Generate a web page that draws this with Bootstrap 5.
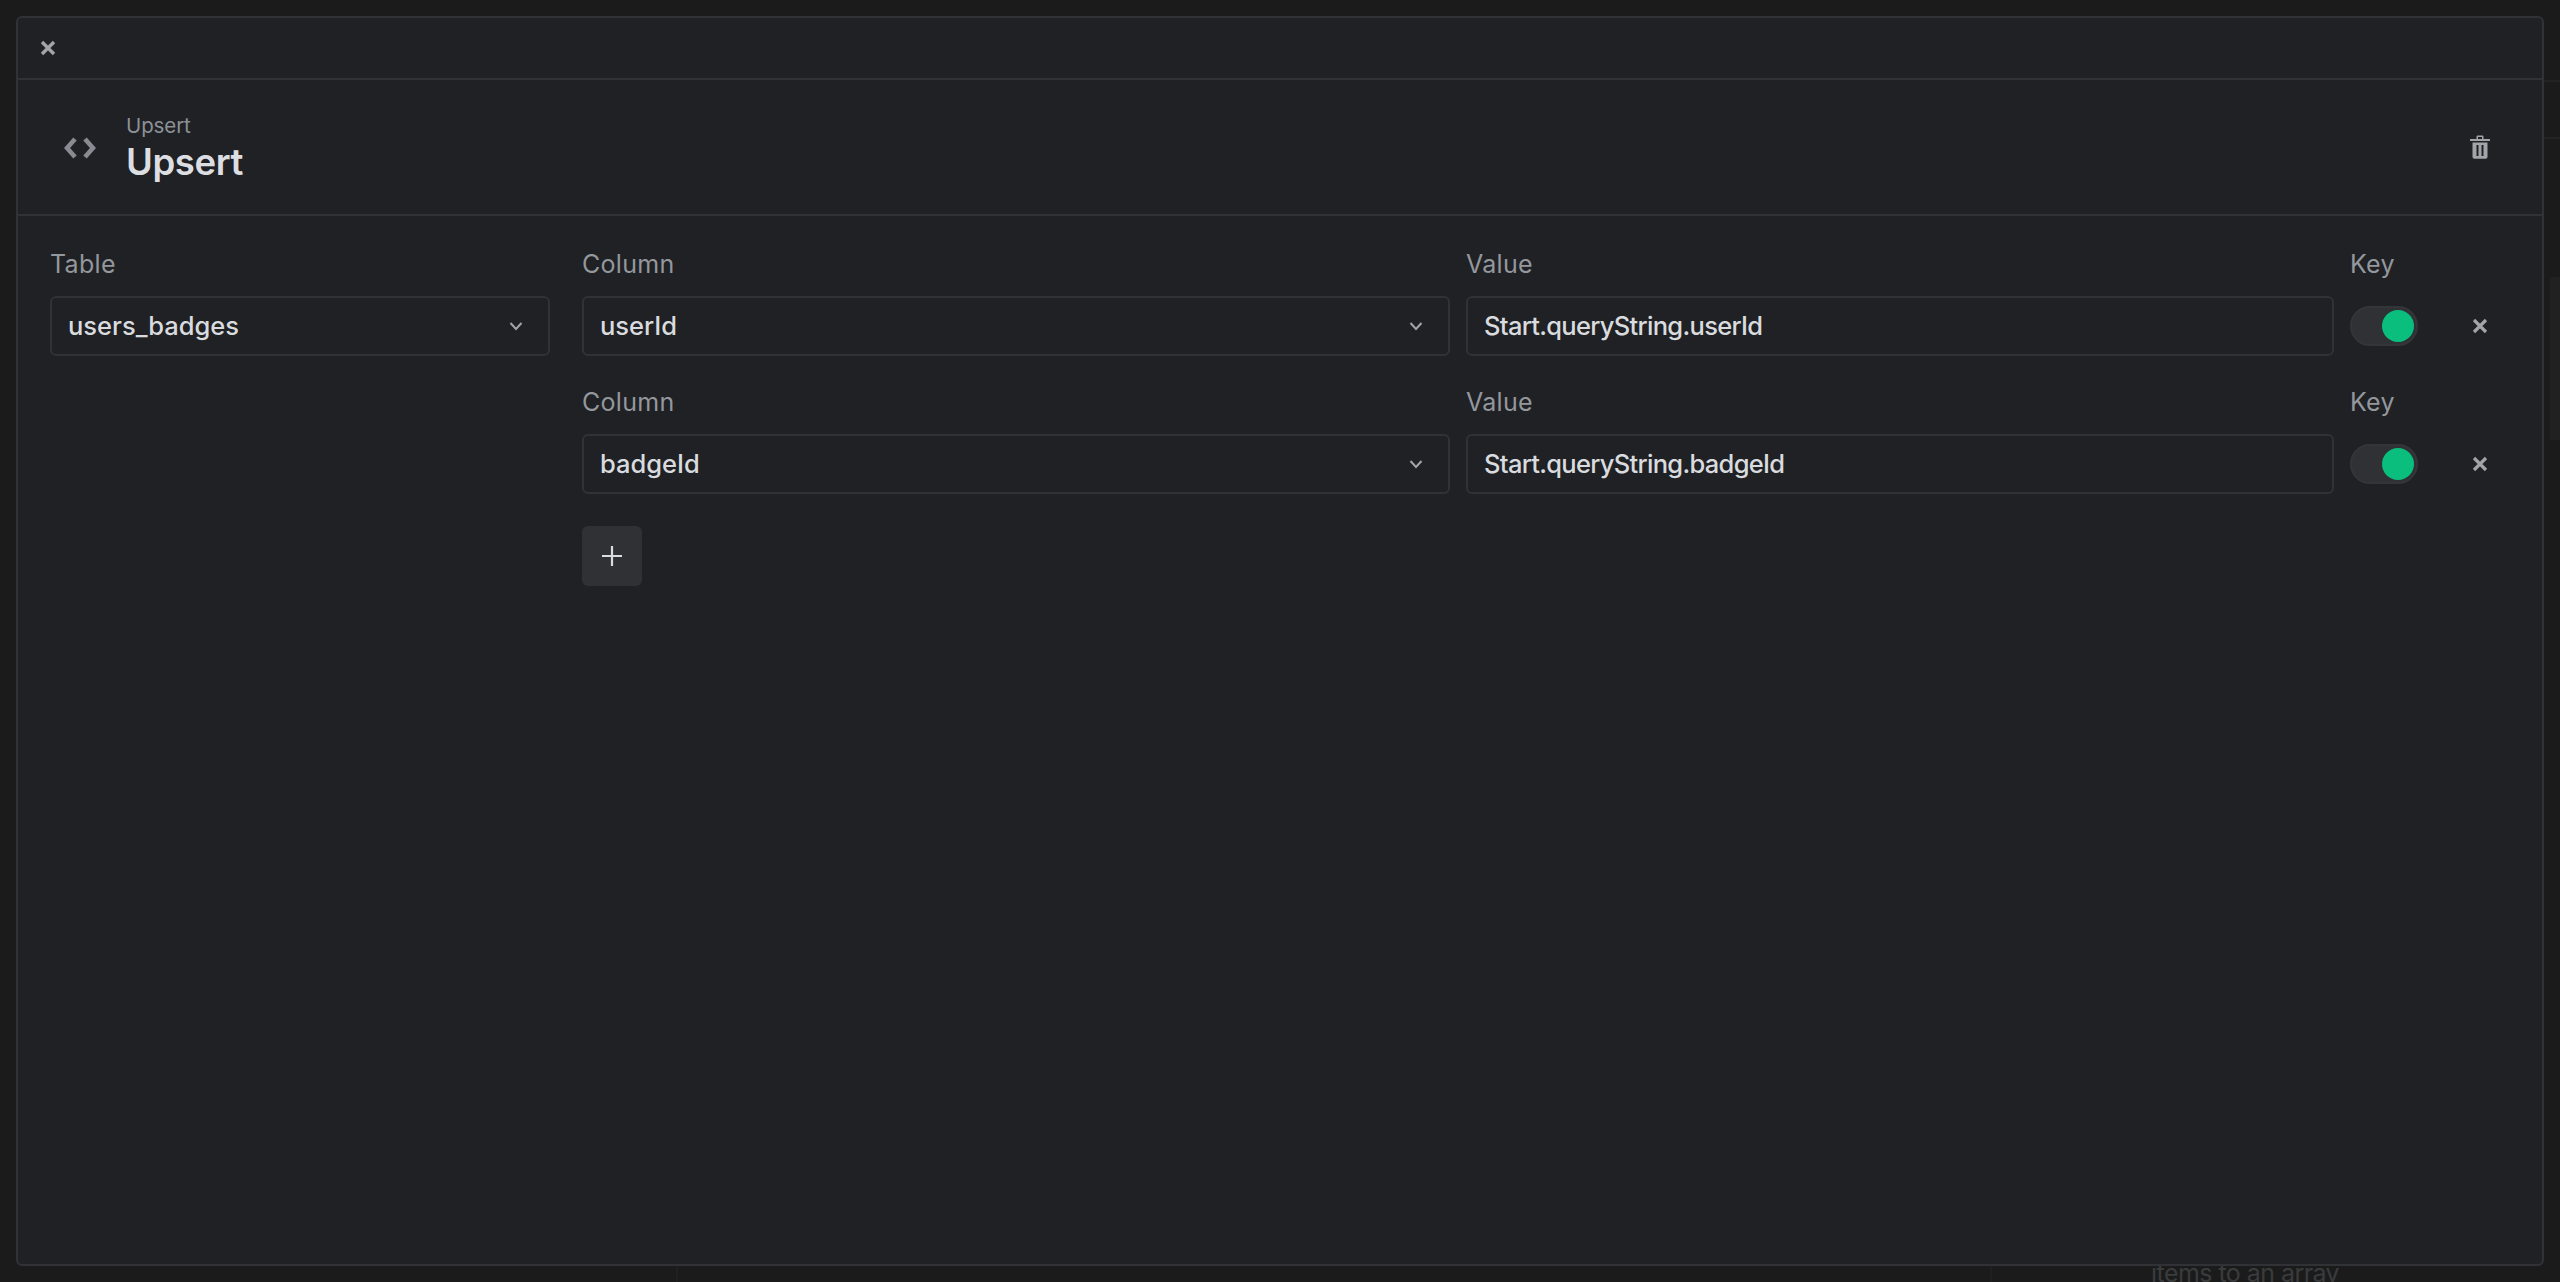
<!DOCTYPE html>
<html lang="en" data-bs-theme="dark">
<head>
<meta charset="utf-8">
<title>Upsert</title>
<link href="https://cdn.jsdelivr.net/npm/bootstrap@5.3.0/dist/css/bootstrap.min.css" rel="stylesheet">
<style>
html,body{height:100%;overflow:hidden}
body{background:#1b1b1b;font-family:Inter,"Noto Sans",sans-serif;color:#d5d7da;position:relative}
.ghost-text{position:absolute;left:2151px;top:1255px;font-size:25px;color:#3a3b3d;line-height:36px;white-space:nowrap;letter-spacing:-.55px}
.ghost-rule{position:absolute}
.ghost-a{left:2550px;top:277px;width:10px;height:163px;background:#212121}
.ghost-b{left:676px;top:1266px;width:1316px;height:16px;border-left:2px solid #202020;border-right:2px solid #202020}
.ghost-c{left:2544px;top:80px;width:16px;height:2px;background:#232323}
.ghost-d{left:2544px;top:137px;width:16px;height:2px;background:#232323}
.sheet{position:absolute;left:16px;top:16px;width:2528px;height:1250px;background:#1f2125;border:2px solid #303236;border-radius:6px;display:flex;flex-direction:column}
.sheet-top{height:62px;border-bottom:2px solid #303236;padding-left:20px}
.icon-btn{background:none;border:0;padding:0;color:#a1a4a9;display:inline-flex;align-items:center;justify-content:center;line-height:0}
.sheet-head{height:136px;border-bottom:2px solid #303236;padding:0 52px 0 46px}
.head-icon{width:32px;color:#888c92;margin-right:30px;position:relative;top:1px}
.head-kicker{font-size:20.5px;line-height:28px;color:#8d9197;letter-spacing:-.1px}
.head-title{font-size:36.5px;line-height:42px;font-weight:600;color:#dcdee1;letter-spacing:-.4px;margin-top:1px}
.sheet-body{padding:32px 32px 0 32px;display:grid;grid-template-columns:500px 1fr;column-gap:32px}
.field-grid{display:grid;grid-template-columns:1fr 1fr 84px 60px;column-gap:16px;row-gap:30px}
.field-label{font-size:25px;line-height:32px;color:#94979c;margin:0 0 16px;display:block;letter-spacing:.3px}
.form-control.tall,.form-select.tall{height:60px;background-color:#1f2125;border:2px solid #303236;border-radius:6px;color:#d9dbde;font-size:25.5px;line-height:36px;padding:10px 16px;font-weight:500;box-shadow:none}
.form-control.tall{letter-spacing:-.7px;padding-top:9px;padding-bottom:11px}
.form-select.tall{background-image:url("data:image/svg+xml,%3csvg xmlns='http://www.w3.org/2000/svg' viewBox='0 0 16 16'%3e%3cpath fill='none' stroke='%23a1a4a9' stroke-width='2' d='M2.5 5l5.5 6 5.5-6'/%3e%3c/svg%3e");background-size:16px 16px;background-position:right 24px center;padding-right:50px;letter-spacing:0}
.form-check.toggle-wrap{margin:0;padding:0;min-height:60px;display:flex;align-items:center}
.form-switch.toggle-wrap .form-check-input:checked{width:68px;height:40px;margin:0;border:2px solid #333539;background-color:#2f3135;background-image:url("data:image/svg+xml,%3csvg xmlns='http://www.w3.org/2000/svg' viewBox='-4 -4 8 8'%3e%3ccircle r='4' fill='%230abf7e'/%3e%3c/svg%3e");background-size:32px 32px;background-position:right 2px center;box-shadow:none}
.remove-cell{height:60px}
.add-btn{width:60px;height:60px;padding:0;background:#2f3135;border:0;border-radius:6px;color:#d9dbde;display:flex;align-items:center;justify-content:center;margin-top:2px}
.remove-spacer{height:48px}
</style>
</head>
<body>
<div class="ghost-rule ghost-a"></div>
<div class="ghost-rule ghost-b"></div>
<div class="ghost-rule ghost-c"></div>
<div class="ghost-rule ghost-d"></div>
<div class="ghost-text">items to an array</div>
<main class="sheet">
  <div class="sheet-top d-flex align-items-center flex-shrink-0">
    <button class="icon-btn" type="button" aria-label="Close">
      <svg width="20" height="20" viewBox="0 0 20 20"><path d="M4 4l12 12M16 4L4 16" stroke="currentColor" stroke-width="3.4" fill="none"/></svg>
    </button>
  </div>
  <header class="sheet-head d-flex align-items-center flex-shrink-0">
    <svg class="head-icon" height="24" viewBox="0 0 32 24" aria-hidden="true"><path d="M11 3L3 12l8 9M21 3l8 9-8 9" stroke="currentColor" stroke-width="4.600" fill="none"/></svg>
    <div class="flex-grow-1">
      <div class="head-kicker">Upsert</div>
      <div class="head-title">Upsert</div>
    </div>
    <button class="icon-btn" type="button" aria-label="Delete">
      <svg width="20" height="24" viewBox="0 0 20 24"><path d="M0 4h20v2H0zM6.500 4V1.700Q6.500.6 7.700.6h4.600q1.200 0 1.200 1.100V4H12V2.100H8V4z" fill="currentColor"/><path fill-rule="evenodd" d="M2.500 7.500h15V22q0 1.800-1.800 1.800H4.300Q2.500 23.800 2.500 22zM6.500 10v11h2V10zM11.500 10v11h2V10z" fill="currentColor"/></svg>
    </button>
  </header>
  <section class="sheet-body">
    <div>
      <label class="field-label" for="tbl">Table</label>
      <select id="tbl" class="form-select tall"><option>users_badges</option></select>
    </div>
    <div>
      <div class="field-grid">
        <div><label class="field-label">Column</label><select class="form-select tall"><option>userId</option></select></div>
        <div><label class="field-label">Value</label><input class="form-control tall" value="Start.queryString.userId"></div>
        <div><span class="field-label">Key</span><div class="form-check form-switch toggle-wrap"><input class="form-check-input" type="checkbox" checked aria-label="Key"></div></div>
        <div class="d-flex flex-column"><div class="remove-spacer"></div><div class="remove-cell d-flex align-items-center justify-content-center"><button class="icon-btn" type="button" aria-label="Remove"><svg width="16" height="16" viewBox="0 0 16 16"><path d="M2 2l12 12M14 2L2 14" stroke="currentColor" stroke-width="3.200" fill="none"/></svg></button></div></div>
        <div><label class="field-label">Column</label><select class="form-select tall"><option>badgeId</option></select></div>
        <div><label class="field-label">Value</label><input class="form-control tall" value="Start.queryString.badgeId"></div>
        <div><span class="field-label">Key</span><div class="form-check form-switch toggle-wrap"><input class="form-check-input" type="checkbox" checked aria-label="Key"></div></div>
        <div class="d-flex flex-column"><div class="remove-spacer"></div><div class="remove-cell d-flex align-items-center justify-content-center"><button class="icon-btn" type="button" aria-label="Remove"><svg width="16" height="16" viewBox="0 0 16 16"><path d="M2 2l12 12M14 2L2 14" stroke="currentColor" stroke-width="3.200" fill="none"/></svg></button></div></div>
        <div>
          <button class="add-btn" type="button" aria-label="Add"><svg width="22" height="22" viewBox="0 0 22 22"><path d="M11 1v20M1 11h20" stroke="currentColor" stroke-width="2.200" fill="none"/></svg></button>
        </div>
      </div>
    </div>
  </section>
</main>
<script src="https://cdn.jsdelivr.net/npm/bootstrap@5.3.0/dist/js/bootstrap.bundle.min.js"></script>
</body>
</html>
